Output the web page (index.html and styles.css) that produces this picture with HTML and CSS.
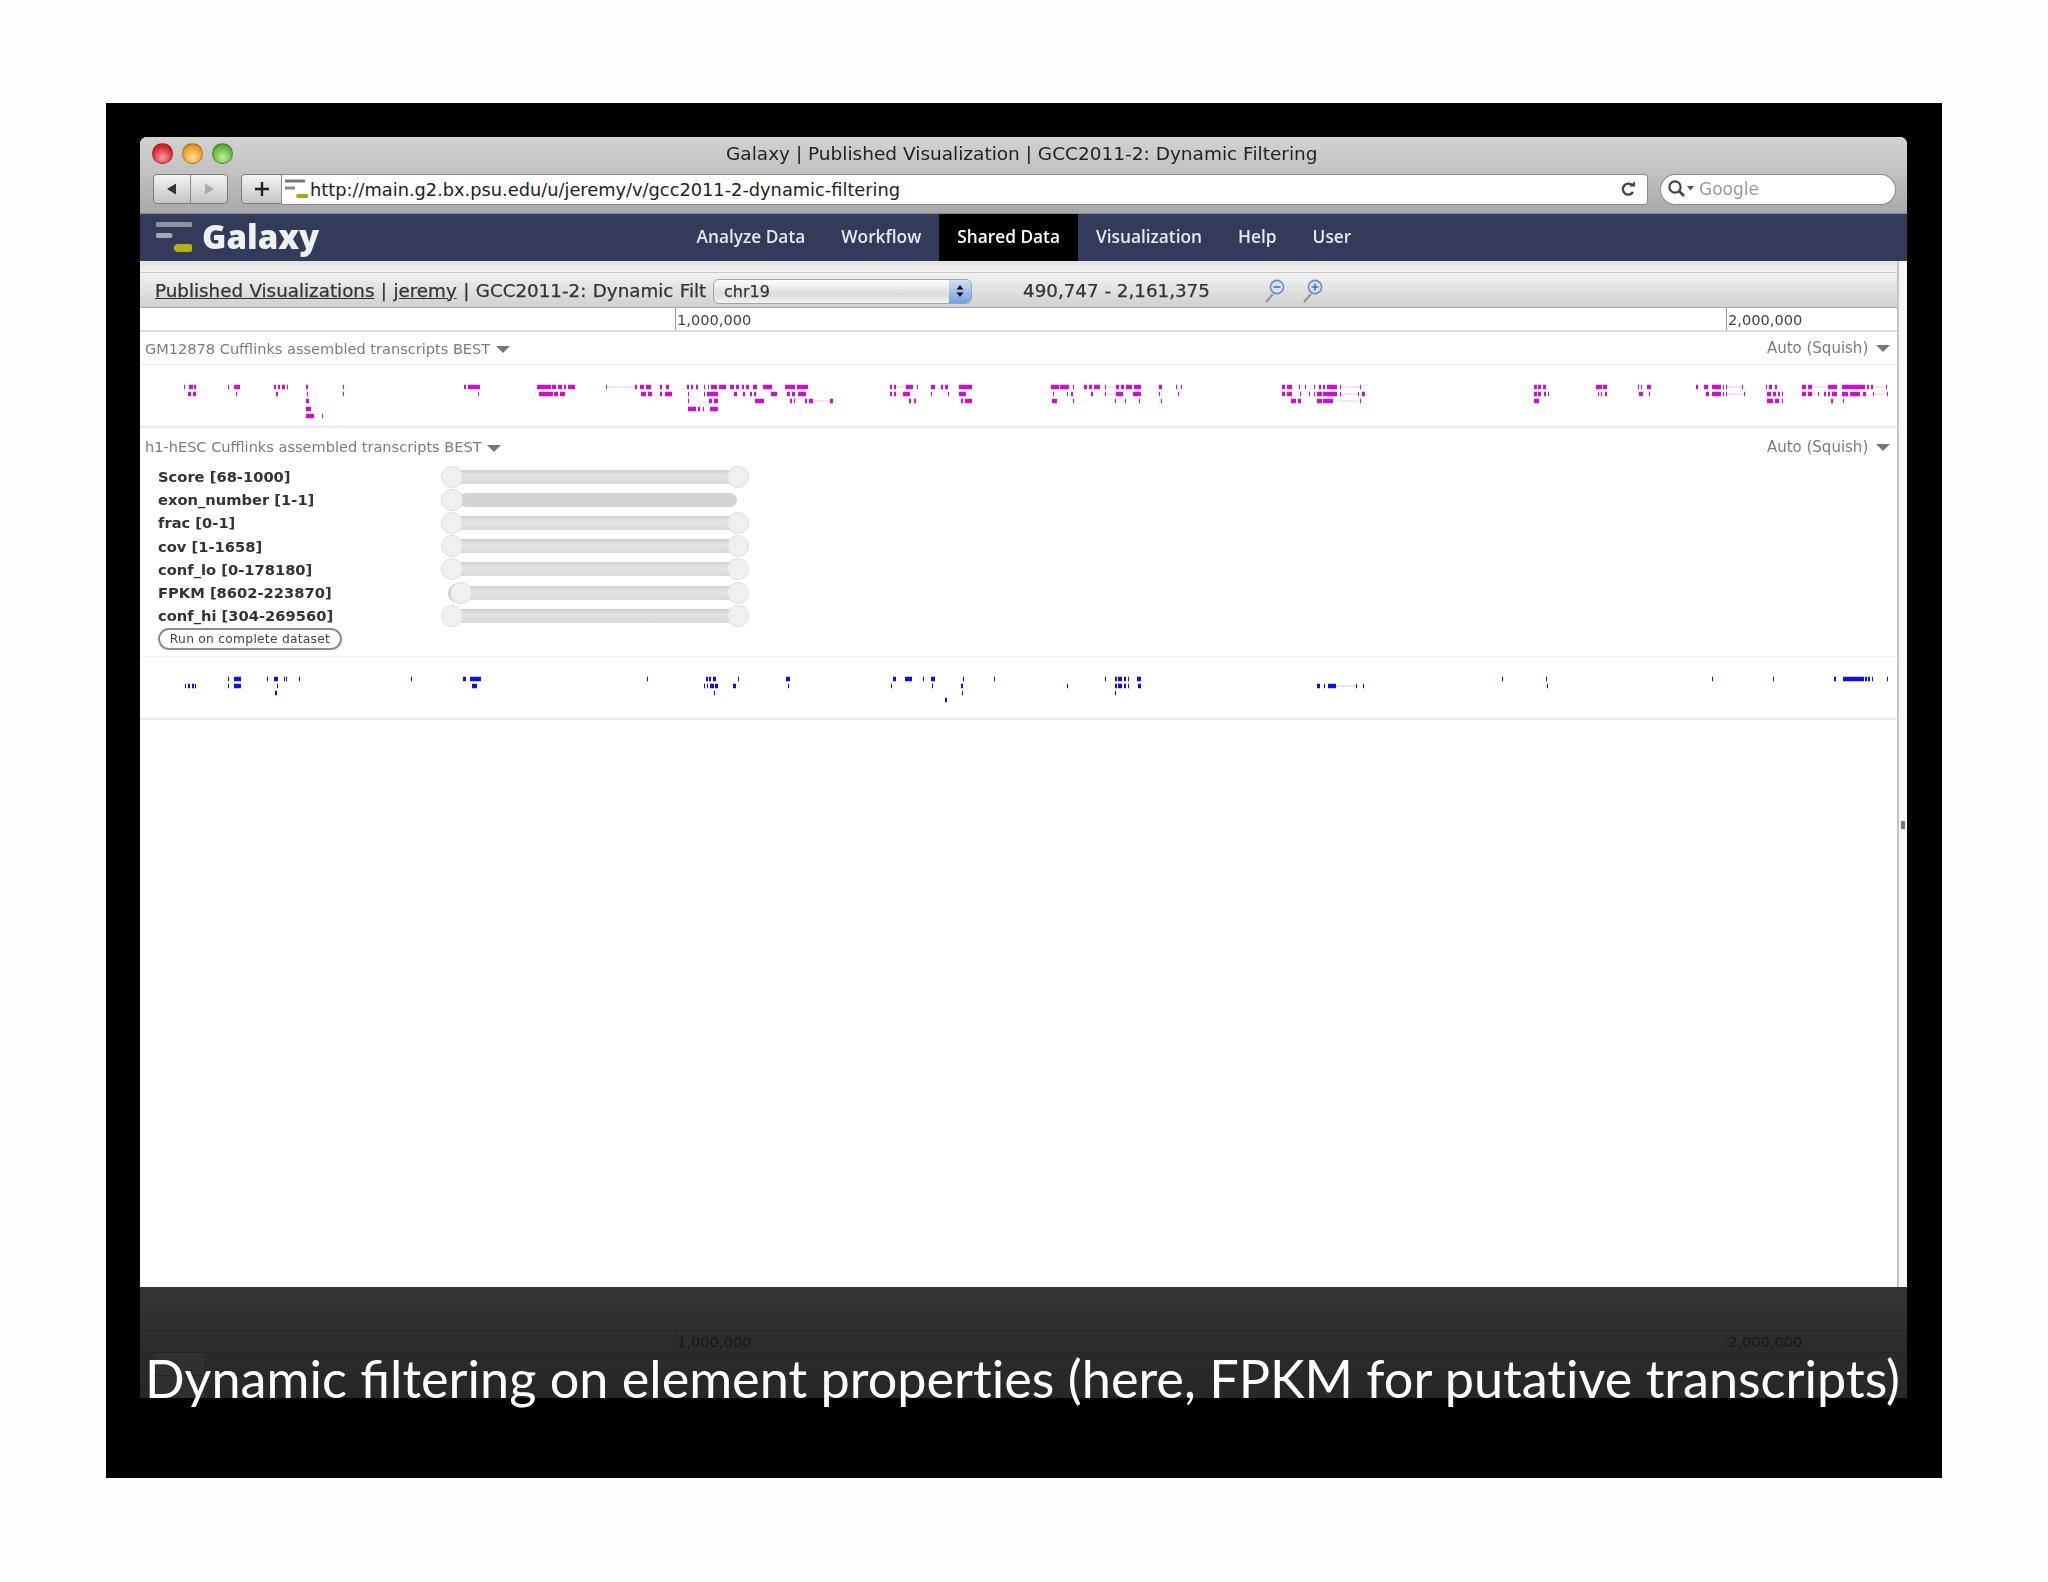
FILE: index.html
```html
<!DOCTYPE html>
<html lang="en">
<head>
<meta charset="utf-8">
<title>Galaxy | Published Visualization | GCC2011-2: Dynamic Filtering</title>
<link rel="stylesheet" href="styles.css">
</head>
<body>
<main class="slide">
  <div class="window">
    <header class="chrome">
      <div class="title-row">
        <div class="lights"><span class="light red"></span><span class="light amber"></span><span class="light green"></span></div>
        <div class="title-text">Galaxy | Published Visualization | GCC2011-2: Dynamic Filtering</div>
      </div>
      <div class="tool-row">
        <div class="nav-buttons">
          <span class="nav-btn"><svg width="14" height="14" viewBox="0 0 14 14"><path d="M11 1.5V12.5L2 7Z" fill="#333"/></svg></span>
          <span class="nav-btn"><svg width="14" height="14" viewBox="0 0 14 14"><path d="M3 1.5V12.5L12 7Z" fill="#aaa"/></svg></span>
        </div>
        <span class="plus-btn"><svg width="18" height="18" viewBox="0 0 18 18"><path d="M9 2V16M2 9H16" stroke="#222" stroke-width="2.4" fill="none"/></svg></span>
        <div class="url-bar">
          <svg class="favicon" width="24" height="22" viewBox="0 0 24 22"><path d="M1 3H21" stroke="#777" stroke-width="3"/><path d="M1 10H11" stroke="#888" stroke-width="3"/><path d="M14 18H23" stroke="#a9a61c" stroke-width="4" stroke-linecap="round"/></svg>
          <span class="url-text">http://main.g2.bx.psu.edu/u/jeremy/v/gcc2011-2-dynamic-filtering</span>
          <svg class="reload" width="18" height="20" viewBox="0 0 18 20"><path d="M13.5 6.5A5.5 5.5 0 1 0 14 13" stroke="#444" stroke-width="2.4" fill="none"/><path d="M10.5 7.5H16V2Z" fill="#444"/></svg>
        </div>
        <div class="search-bar">
          <svg width="29" height="20" viewBox="0 0 29 20"><circle cx="8" cy="8" r="5.6" stroke="#444" stroke-width="2.2" fill="none"/><path d="M12 12L17 17" stroke="#444" stroke-width="2.6"/><path d="M20 7H27L23.500 11.500Z" fill="#555"/></svg>
          <span class="search-text">Google</span>
        </div>
      </div>
    </header>

    <nav class="masthead">
      <div class="brand">
        <svg class="logo" width="36" height="34" viewBox="0 0 36 34"><path d="M2 3.5H34" stroke="#8f93a0" stroke-width="5" stroke-linecap="round"/><path d="M2 14.5H14" stroke="#a4a7b1" stroke-width="5" stroke-linecap="round"/><path d="M22 27H33" stroke="#b5b216" stroke-width="8" stroke-linecap="round"/></svg>
        <span class="brand-name">Galaxy</span>
      </div>
      <div class="nav-links">
        <a class="nav-link">Analyze Data</a>
        <a class="nav-link">Workflow</a>
        <a class="nav-link is-active">Shared Data</a>
        <a class="nav-link">Visualization</a>
        <a class="nav-link">Help</a>
        <a class="nav-link">User</a>
      </div>
    </nav>

    <div class="page">
      <div class="panel">
        <div class="panel-gap"></div>
        <div class="toolbar">
          <div class="crumbs"><a class="crumb-link">Published Visualizations</a> | <a class="crumb-link">jeremy</a> | GCC2011-2: Dynamic Filt</div>
          <div class="chrom-select"><span class="chrom-name">chr19</span><span class="chrom-arrows"><svg width="10" height="16" viewBox="0 0 10 16"><path d="M5 2L8.5 6.5H1.5ZM5 14L1.5 9.5H8.5Z" fill="#111"/></svg></span></div>
          <div class="range">490,747 - 2,161,375</div>
          <div class="zooms">
            <svg width="24" height="24" viewBox="0 0 24 24"><path d="M9 15L2 23" stroke="#9a9a9a" stroke-width="2.6"/><circle cx="13" cy="8" r="6.6" fill="#d5e2f6" stroke="#6f8fc4" stroke-width="1.6"/><path d="M9.5 8H16.5" stroke="#5372a8" stroke-width="1.6"/></svg>
            <svg width="24" height="24" viewBox="0 0 24 24"><path d="M9 15L2 23" stroke="#9a9a9a" stroke-width="2.6"/><circle cx="13" cy="8" r="6.6" fill="#d5e2f6" stroke="#6f8fc4" stroke-width="1.6"/><path d="M9.5 8H16.5M13 4.5V11.5" stroke="#5372a8" stroke-width="1.6"/></svg>
          </div>
        </div>
        <div class="ruler">
          <span class="tick tick-first">1,000,000</span>
          <span class="tick tick-second">2,000,000</span>
        </div>

        <section class="track">
          <div class="track-head">
            <span class="track-name">GM12878 Cufflinks assembled transcripts BEST <i class="caret"></i></span>
            <span class="track-mode">Auto (Squish) <i class="caret caret-mode"></i></span>
          </div>
          <svg class="canvas" width="1757" height="63" viewBox="140 365 1757 63">
            <path class="rule" d="M140 427H1897"/>
            <path class="thin mag" d="M608 387H634M896 387H906M1105 387H1116M1340 387H1360M1726 387H1742M1812 387H1828M1873 387H1886M896 394H903M1105 394H1116M1340 394H1358M1726 394H1744M1873 394H1887M813 401H833M1337 401H1358"/>
            <path class="feat mag" d="M184 387h1M189 387h4M194 387h2M228 387h1M234 387h6M274 387h2M278 387h2M282 387h3M287 387h1M306 387h2M343 387h1M464 387h2M468 387h12M537 387h14M552 387h4M558 387h4M564 387h2M568 387h7M606 387h1M635 387h2M640 387h4M646 387h5M660 387h2M666 387h3M687 387h2M691 387h2M696 387h2M704 387h1M708 387h1M711 387h6M719 387h7M730 387h4M736 387h3M742 387h2M746 387h3M753 387h4M763 387h9M785 387h10M797 387h11M890 387h2M894 387h2M906 387h7M917 387h1M931 387h4M941 387h2M945 387h3M959 387h13M1051 387h8M1060 387h9M1073 387h1M1084 387h3M1089 387h3M1094 387h6M1105 387h1M1116 387h3M1121 387h3M1126 387h6M1134 387h7M1159 387h3M1176 387h1M1181 387h1M1282 387h3M1287 387h5M1299 387h1M1305 387h1M1314 387h1M1319 387h2M1323 387h2M1327 387h10M1340 387h1M1360 387h1M1534 387h3M1538 387h3M1543 387h3M1596 387h6M1603 387h4M1638 387h1M1641 387h1M1647 387h4M1696 387h2M1704 387h4M1712 387h9M1723 387h1M1726 387h1M1742 387h1M1766 387h1M1769 387h3M1775 387h2M1802 387h4M1808 387h4M1828 387h9M1842 387h23M1867 387h2M1871 387h2M1886 387h1"/>
            <path class="feat mag" d="M188 394h3M193 394h3M236 394h1M276 394h2M307 394h1M343 394h1M478 394h1M539 394h14M554 394h4M560 394h5M641 394h5M648 394h4M660 394h2M665 394h7M688 394h1M704 394h1M707 394h11M734 394h3M743 394h2M750 394h2M754 394h2M771 394h6M787 394h3M792 394h3M798 394h8M890 394h2M894 394h2M903 394h7M931 394h1M948 394h1M959 394h7M1053 394h1M1067 394h1M1071 394h2M1091 394h2M1105 394h1M1116 394h7M1133 394h8M1159 394h1M1178 394h1M1282 394h3M1287 394h5M1300 394h1M1309 394h1M1314 394h1M1317 394h5M1323 394h14M1340 394h1M1358 394h1M1362 394h3M1534 394h3M1538 394h3M1544 394h2M1548 394h1M1598 394h1M1601 394h1M1605 394h2M1639 394h4M1649 394h1M1706 394h3M1712 394h9M1723 394h1M1726 394h1M1744 394h1M1767 394h4M1773 394h3M1778 394h2M1782 394h1M1802 394h4M1808 394h4M1818 394h1M1824 394h2M1828 394h2M1832 394h5M1842 394h6M1850 394h10M1863 394h3M1873 394h1M1887 394h1"/>
            <path class="feat mag" d="M306 401h3M688 401h1M709 401h3M714 401h4M755 401h9M790 401h2M794 401h1M805 401h2M809 401h4M830 401h3M909 401h2M914 401h2M961 401h2M965 401h7M1052 401h5M1073 401h1M1115 401h1M1125 401h1M1139 401h1M1161 401h1M1291 401h5M1298 401h3M1317 401h5M1323 401h10M1360 401h1M1534 401h5M1767 401h6M1775 401h4M1782 401h1M1831 401h2M1843 401h1"/>
            <path class="feat mag" d="M306 409h5M688 409h8M698 409h2M703 409h1M710 409h8"/>
            <path class="feat mag" d="M306 416h8M322 416h1"/>
          </svg>
        </section>

        <section class="track">
          <div class="track-head track-head-second">
            <span class="track-name">h1-hESC Cufflinks assembled transcripts BEST <i class="caret"></i></span>
            <span class="track-mode">Auto (Squish) <i class="caret caret-mode"></i></span>
          </div>
          <div class="filters">
            <div class="filter"><span class="filter-name">Score [68-1000]</span><div class="slider"><span class="slider-bar"></span><span class="handle handle-min"></span><span class="handle handle-max"></span></div></div>
            <div class="filter"><span class="filter-name">exon_number [1-1]</span><div class="slider"><span class="slider-bar slider-bar-full"></span><span class="handle handle-min"></span></div></div>
            <div class="filter"><span class="filter-name">frac [0-1]</span><div class="slider"><span class="slider-bar"></span><span class="handle handle-min"></span><span class="handle handle-max"></span></div></div>
            <div class="filter"><span class="filter-name">cov [1-1658]</span><div class="slider"><span class="slider-bar"></span><span class="handle handle-min"></span><span class="handle handle-max"></span></div></div>
            <div class="filter"><span class="filter-name">conf_lo [0-178180]</span><div class="slider"><span class="slider-bar"></span><span class="handle handle-min"></span><span class="handle handle-max"></span></div></div>
            <div class="filter"><span class="filter-name">FPKM [8602-223870]</span><div class="slider"><span class="slider-bar slider-bar-moved"></span><span class="handle handle-moved"></span><span class="handle handle-max"></span></div></div>
            <div class="filter"><span class="filter-name">conf_hi [304-269560]</span><div class="slider"><span class="slider-bar"></span><span class="handle handle-min"></span><span class="handle handle-max"></span></div></div>
            <button class="run-btn" type="button">Run on complete dataset</button>
          </div>
          <svg class="canvas" width="1757" height="63" viewBox="140 657 1757 63">
            <path class="rule" d="M140 719H1897"/>
            <path class="thin blu" d="M1336 686H1356"/>
            <path class="feat blu" d="M228 679h1M234 679h7M267 679h1M274 679h4M284 679h1M286 679h1M299 679h1M411 679h1M463 679h3M470 679h11M647 679h1M706 679h2M709 679h2M713 679h3M738 679h1M786 679h4M893 679h3M905 679h7M923 679h1M931 679h4M963 679h1M994 679h1M1105 679h1M1115 679h2M1118 679h4M1124 679h2M1128 679h1M1137 679h4M1502 679h1M1546 679h1M1712 679h1M1773 679h1M1834 679h2M1843 679h21M1865 679h2M1868 679h2M1872 679h1M1887 679h1"/>
            <path class="feat blu" d="M185 686h1M188 686h2M192 686h2M195 686h1M228 686h1M234 686h7M277 686h1M472 686h5M704 686h1M707 686h1M710 686h4M715 686h3M733 686h3M788 686h1M891 686h1M932 686h1M961 686h2M1067 686h1M1115 686h2M1118 686h4M1124 686h2M1128 686h1M1138 686h3M1317 686h3M1324 686h1M1328 686h8M1356 686h1M1363 686h1M1547 686h1"/>
            <path class="feat blu" d="M275 693h2M714 693h1M962 693h1M1115 693h1"/>
            <path class="feat blu" d="M945 700h2"/>
          </svg>
        </section>
        <div class="empty"></div>
      </div>
      <div class="side-strip"><i class="side-grip"></i></div>
    </div>

    <div class="shade">
      <div class="shade-gap"></div>
      <div class="shade-ruler"><span class="shade-tick shade-tick-first">1,000,000</span><span class="shade-tick shade-tick-second">2,000,000</span></div>
      <div class="shade-row"><span class="shade-box"></span></div>
      <div class="shade-row shade-row-last"><span class="shade-box"></span></div>
    </div>
  </div>
  <p class="caption">Dynamic filtering on element <span class="no-lig">properties</span> (here, FPKM for <span class="no-lig">putative</span> transcripts)</p>
</main>
</body>
</html>
```

FILE: styles.css
```css
* { box-sizing: border-box; }
html, body { margin: 0; background: #fefefe; }
body { height: 1582px; overflow: hidden; font-family: "DejaVu Sans", sans-serif; }

.slide {
  position: relative;
  width: 1836px;
  height: 1375px;
  margin: 103px 0 0 106px;
  padding: 34px 35px 0 34px;
  background: #000;
}

.window {
  position: relative;
  display: flex;
  flex-direction: column;
  width: 1767px;
  height: 1261px;
  border-radius: 7px 7px 0 0;
  overflow: hidden;
  background: #fff;
  filter: blur(0.5px);
}

/* Browser chrome */
.chrome {
  height: 77px;
  flex: none;
  background: linear-gradient(#d2d2d2, #c2c2c2 45%, #a8a8a8);
  border-bottom: 1px solid #8a8a8a;
}
.title-row { position: relative; display: flex; align-items: center; height: 33px; padding-left: 12px; }
.lights { display: flex; gap: 9px; }
.light { width: 21px; height: 21px; border-radius: 50%; border: 1px solid rgba(0,0,0,.25); }
.red { background: radial-gradient(circle at 50% 70%, #f8a0a0, #d8222a 65%, #a81c20); }
.amber { background: radial-gradient(circle at 50% 70%, #fde29a, #ec9a1c 65%, #b87414); }
.green { background: radial-gradient(circle at 50% 70%, #c8eea0, #5cb338 65%, #40882a); }
.title-text { margin-left: 493px; font-size: 18.5px; color: #222; white-space: nowrap; }

.tool-row { display: flex; align-items: center; height: 36px; padding: 2px 0 0 13px; }
.nav-buttons { display: flex; width: 75px; height: 30px; border: 1px solid #7c7c7c; border-radius: 4px; background: linear-gradient(#f4f4f4, #c4c4c4); }
.nav-btn { display: flex; align-items: center; justify-content: center; flex: 1; }
.nav-btn + .nav-btn { border-left: 1px solid #8a8a8a; }
.plus-btn { display: flex; align-items: center; justify-content: center; width: 41px; height: 30px; margin-left: 13px; border: 1px solid #7c7c7c; border-radius: 4px 0 0 4px; background: linear-gradient(#f4f4f4, #c4c4c4); }
.url-bar { display: flex; align-items: center; width: 1365px; height: 29px; padding: 0 10px 0 2px; background: #fff; box-shadow: 0 0 0 1px #8c8c8c; border-radius: 0 3px 3px 0; }
.favicon { flex: none; }
.url-text { margin-left: 2px; font-size: 17.8px; color: #222; white-space: nowrap; }
.reload { margin-left: auto; }
.search-bar { display: flex; align-items: center; gap: 3px; width: 234px; height: 29px; margin-left: 14px; padding-left: 6px; background: #fff; border-radius: 15px; box-shadow: 0 0 0 1px #8c8c8c; }
.search-text { font-size: 17px; color: #9a9a9a; }

/* Galaxy masthead */
.masthead { display: flex; height: 47px; flex: none; background: #343a59; }
.brand { display: flex; align-items: center; width: 538.500px; padding-left: 16px; }
.logo { flex: none; }
.brand-name { margin-left: 10px; font: 800 33px "Open Sans", sans-serif; color: #eef0f2; position: relative; top: -1px; }
.nav-links { display: flex; }
.nav-link { display: flex; align-items: center; padding: 0 18px 3px; font: 600 17.3px "Open Sans", sans-serif; color: #e8e9ee; white-space: nowrap; }
.nav-link.is-active { background: #000; color: #fff; }

/* Page */
.page { display: flex; flex: 1; min-height: 0; }
.panel { display: flex; flex-direction: column; flex: 1; min-width: 0; }
.side-strip { position: relative; width: 10px; flex: none; background: #f6f6f6; border-left: 2px solid #c4c4c4; }
.side-grip { position: absolute; left: 2px; top: 560px; width: 4px; height: 8px; background: #777; }

.panel-gap { height: 12px; flex: none; background: linear-gradient(#e2e2e2, #f2f2f2); border-bottom: 1px solid #c8c8c8; }
.toolbar { display: flex; align-items: center; height: 35px; flex: none; padding-left: 15px; background: linear-gradient(#f2f2f2, #d0d0d0); border-bottom: 1px solid #a8a8a8; font-size: 18.3px; color: #333; white-space: nowrap; -webkit-text-stroke: .25px #333; }
.crumbs { width: 558px; flex: none; white-space: nowrap; word-spacing: .6px; }
.crumb-link { text-decoration: underline; }
.chrom-select { display: flex; align-items: center; justify-content: space-between; width: 259px; height: 25px; margin-top: 2px; flex: none; border: 1px solid #a4a4a4; border-radius: 6px; background: linear-gradient(#fff, #dcdcdc 60%, #f2f2f2); }
.chrom-name { margin-left: 10px; font-size: 16px; }
.chrom-arrows { display: flex; align-items: center; justify-content: center; width: 22px; height: 23px; background: linear-gradient(#d4e3f8, #6f9fe0); border-radius: 0 5px 5px 0; }
.range { margin-left: 51px; width: 186px; white-space: nowrap; }
.zooms { display: flex; gap: 14px; margin: 2px 0 0 55px; }

.ruler { display: flex; height: 24px; flex: none; border-bottom: 2px solid #dcdcdc; font-size: 14.6px; color: #444; white-space: nowrap; }
.tick { display: flex; align-items: center; padding-left: 1px; border-left: 1px solid #999; }
.tick-first { margin-left: 535px; width: 1051px; }
.tick-second { flex: 1; }

.track { flex: none; }
.track-head { display: flex; justify-content: space-between; align-items: center; height: 33px; padding: 0 7px 0 5px; border-bottom: 1px solid #ececec; font-size: 15px; color: #7c7c7c; white-space: nowrap; }
.track-head-second { height: 37px; border-bottom: 0; }
.track-name { font-size: 14.55px; }
.caret { display: inline-block; width: 0; height: 0; margin-left: 1px; border: solid transparent; border-width: 7px 7px 0; border-top-color: #777; vertical-align: middle; }
.caret-mode { margin-left: 3px; }
.canvas { display: block; filter: blur(0.5px); }
.rule { fill: none; stroke: #ececec; stroke-width: 3; }
.feat { fill: none; stroke-width: 4.5; }
.thin { fill: none; stroke-width: 1; }
.feat.mag { stroke: #cc10cc; }
.thin.mag { stroke: #e8c8e8; }
.feat.blu { stroke: #1010e0; }
.thin.blu { stroke: #c8c8f0; }

.filters { height: 192px; padding-left: 18px; border-bottom: 1px solid #f0f0f0; }
.filter { display: flex; align-items: center; height: 23.2px; }
.filter-name { width: 283px; font: 700 14.7px "DejaVu Sans", sans-serif; color: #333; white-space: nowrap; }
.slider { position: relative; width: 308px; height: 22px; }
.slider-bar { position: absolute; left: 18px; width: 272px; top: 4px; height: 14px; background: linear-gradient(#d0d0d0, #e4e4e4 40%, #dadada); border-radius: 2px; }
.slider-bar-full { width: 278px; background: #d4d4d4; border-radius: 7px; }
.slider-bar-moved { left: 28px; width: 262px; }
.handle { position: absolute; top: 0; width: 22px; height: 22px; border-radius: 50%; background: #f0f0f0; border: 1px solid #dedede; }
.handle-min { left: 0; }
.handle-max { right: 0; }
.handle-moved { left: 9px; box-shadow: -3px 0 0 -1px #cfcfcf; }
.run-btn { display: block; width: 184px; height: 22px; margin: 1px 0 0; padding: 0; border: 2px solid #8c8c8c; border-radius: 11px; background: #fff; font: 12.3px "DejaVu Sans", sans-serif; letter-spacing: .25px; color: #444; white-space: nowrap; }
.empty { flex: 1; }

/* Dark caption band over the window */
.shade { position: absolute; left: 0; right: 0; bottom: 0; height: 111px; display: flex; flex-direction: column; background: linear-gradient(#363436, #2c2b2c 60%, #282728); }
.shade-gap { height: 44px; border-bottom: 1px solid #252425; }
.shade-ruler { display: flex; height: 22px; border-bottom: 1px solid #252425; font-size: 14.6px; color: #161616; }
.shade-tick { display: flex; align-items: center; padding-left: 1px; border-left: 1px solid #252425; }
.shade-tick-first { margin-left: 535px; width: 1051px; }
.shade-tick-second { flex: 1; }
.shade-row { flex: 1; padding-left: 14px; border-bottom: 1px solid #252425; }
.shade-row-last { border-bottom: 0; }
.shade-box { display: block; width: 50px; height: 100%; background: #313031; }

.caption {
  position: absolute;
  left: 39px;
  top: 1241px;
  margin: 0;
  font: 400 52.2px/68px "Lato", sans-serif;
  color: #fff;
  white-space: nowrap;
}
.no-lig { font-variant-ligatures: none; }
```
